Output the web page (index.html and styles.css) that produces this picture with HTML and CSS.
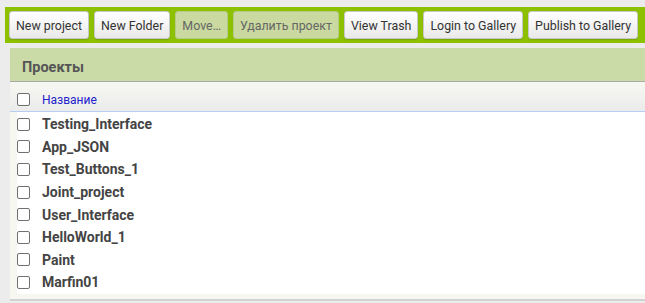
FILE: index.html
```html
<!DOCTYPE html>
<html>
<head>
<meta charset="utf-8">
<link rel="stylesheet" href="styles.css">
</head>
<body>
<div class="toolbar">
  <button class="btn">New project</button>
  <button class="btn">New Folder</button>
  <button class="btn disabled">Move…</button>
  <button class="btn disabled">Удалить проект</button>
  <button class="btn">View Trash</button>
  <button class="btn">Login to Gallery</button>
  <button class="btn">Publish to Gallery</button>
</div>
<div class="panel">
  <div class="panel-head">Проекты</div>
  <div class="col-head">
    <span class="cb"></span>
    <a class="col-link">Название</a>
  </div>
  <div class="rows">
    <div class="row"><span class="cb"></span><span class="name">Testing_Interface</span></div>
    <div class="row"><span class="cb"></span><span class="name">App_JSON</span></div>
    <div class="row"><span class="cb"></span><span class="name">Test_Buttons_1</span></div>
    <div class="row"><span class="cb"></span><span class="name">Joint_project</span></div>
    <div class="row"><span class="cb"></span><span class="name">User_Interface</span></div>
    <div class="row"><span class="cb"></span><span class="name">HelloWorld_1</span></div>
    <div class="row"><span class="cb"></span><span class="name">Paint</span></div>
    <div class="row"><span class="cb"></span><span class="name">Marfin01</span></div>
  </div>
</div>
</body>
</html>
```
FILE: styles.css
```css
html, body {
  margin: 0;
  padding: 0;
  overflow: hidden;
}
body {
  background: #ececec;
  font-family: Roboto, "Liberation Sans", sans-serif;
  padding-top: 7px;
  height: 303px;
}
.toolbar {
  margin-left: 5px;
  background: #8dc100;
  padding: 4px 0 4px 4px;
  display: flex;
  gap: 5px;
  height: 28px;
}
.btn {
  height: 28px;
  box-sizing: border-box;
  padding: 0 6px;
  border: 1px solid #c8c8c8;
  border-radius: 3px;
  background: linear-gradient(#ffffff, #e9e9e9);
  font-family: Roboto, "Liberation Sans", sans-serif;
  font-size: 12.4px;
  color: #333;
  white-space: nowrap;
  box-shadow: 0 1px 1px rgba(0,0,0,0.15);
}
.btn.disabled {
  background: #c9d9a0;
  border-color: #b5c98a;
  color: #666;
  box-shadow: none;
}
.panel {
  margin: 5px -20px 0 10px;
  background: #f7f7f2;
  border-bottom: 2px solid #d2d2d2;
}
.panel-head {
  height: 34px;
  box-sizing: border-box;
  padding-top: 5px;
  background: #cbdba8;
  border-bottom: 1px solid #a9a9a9;
  display: flex;
  align-items: center;
  padding-left: 12px;
  font-size: 14.5px;
  font-weight: bold;
  color: #555;
}
.col-head {
  height: 30px;
  background: linear-gradient(#f7f7f2, #ebebeb);
  border-bottom: 1px solid #b8cdf6;
  display: flex;
  align-items: center;
  padding-left: 7px;
  padding-top: 6px;
  box-sizing: border-box;
}
.cb {
  width: 13px;
  height: 13px;
  box-sizing: border-box;
  border: 1px solid #707070;
  border-radius: 2px;
  background: #fff;
  margin-right: 12px;
  flex: none;
}
.col-link {
  font-size: 12px;
  color: #2222cc;
}
.rows {
  margin-left: 7px;
  background: #fff;
  padding-top: 1px;
  padding-bottom: 0;
  margin-bottom: 5px;
}
.row {
  height: 22.6px;
  display: flex;
  align-items: center;
}
.name {
  font-size: 14px;
  font-weight: bold;
  color: #444;
}
```
